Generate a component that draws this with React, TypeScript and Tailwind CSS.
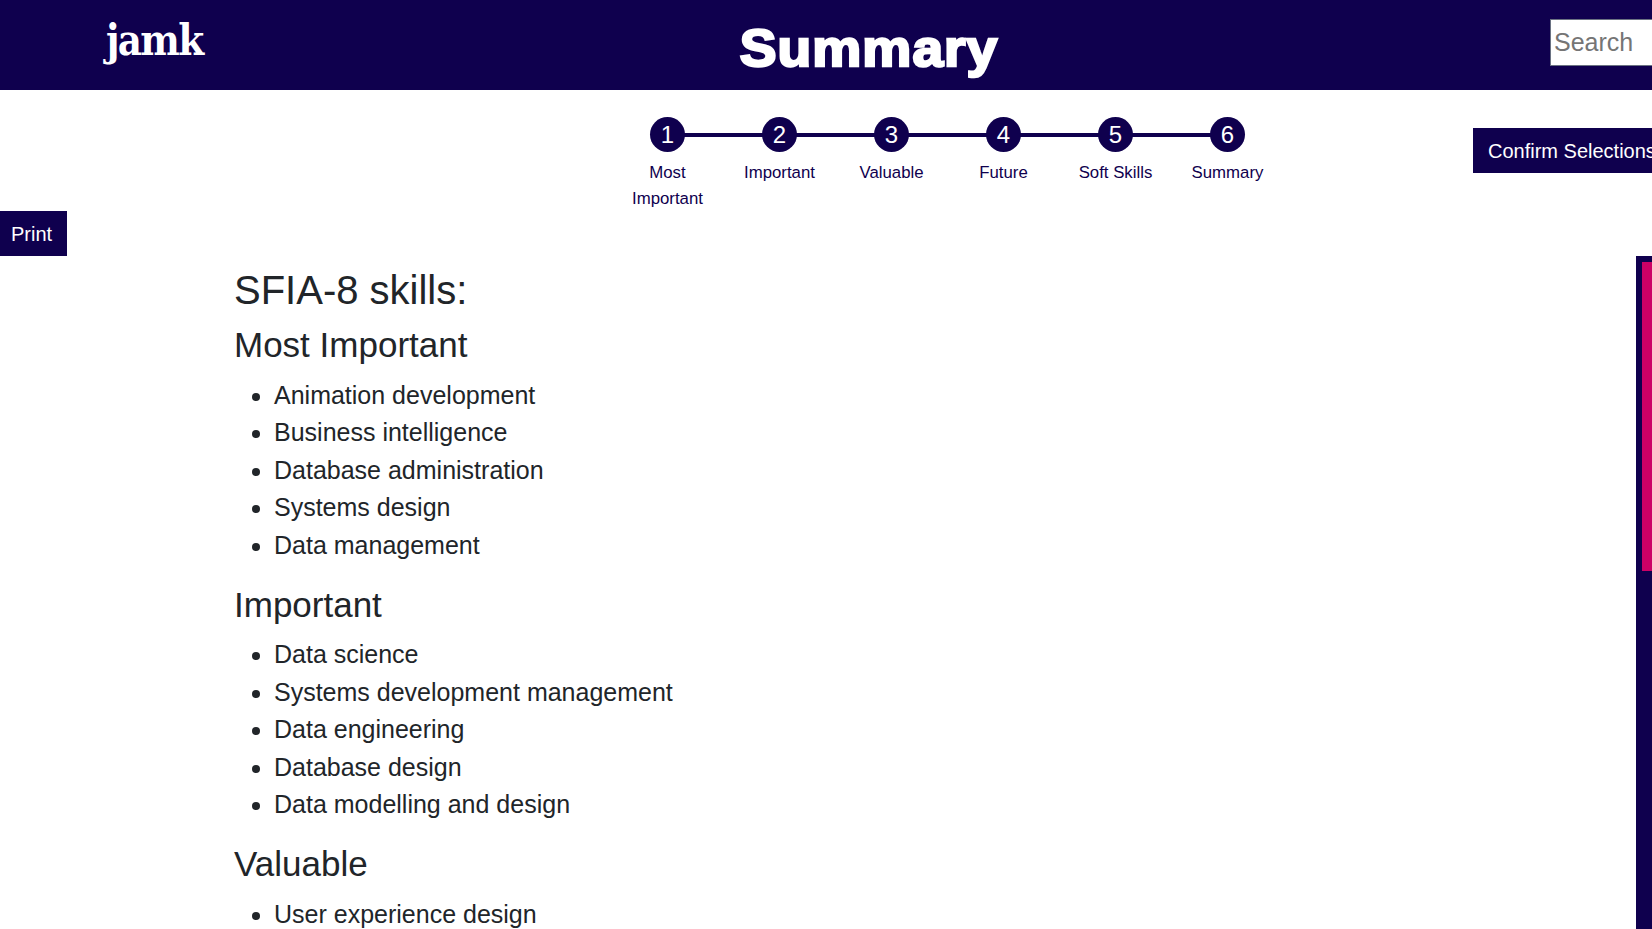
const steps = ["Most Important", "Important", "Valuable", "Future", "Soft Skills", "Summary"];

const sections = [
  {
    title: "Most Important",
    skills: ["Animation development", "Business intelligence", "Database administration", "Systems design", "Data management"],
  },
  {
    title: "Important",
    skills: ["Data science", "Systems development management", "Data engineering", "Database design", "Data modelling and design"],
  },
  {
    title: "Valuable",
    skills: ["User experience design"],
  },
];

function Stepper() {
  return (
    <ol className="flex w-[672px] shrink-0 pt-[27px]">
      {steps.map((step, i) => (
        <li key={step} className="relative w-[112px] flex flex-col items-center text-center">
          {/* connector runs from the previous circle's centre to this one */}
          {i > 0 && <div className="absolute top-[16px] right-[56px] w-[112px] h-[4px] bg-[#0f004e]" />}
          <div className="relative z-10 w-[35px] h-[35px] pl-[1px] rounded-full bg-[#0f004e] text-white text-[24px] leading-[35px]">{i + 1}</div>
          <div className="mt-[8px] pl-[16px] pr-[15px] text-[16.8px] leading-[26px] text-[#0f004e]">{step}</div>
        </li>
      ))}
    </ol>
  );
}

export default function App() {
  return (
    <div className="h-[929px] flex flex-col overflow-hidden bg-white font-['Liberation_Sans',Arial,sans-serif] text-[#212529]">
      <header className="bg-[#0f004e] h-[90px] shrink-0 flex items-start">
        <div className="w-[740px] shrink-0 pl-[106px] pt-[10px]">
          <div className="origin-left scale-x-[0.87] font-['DejaVu_Serif',serif] font-bold text-[43px] leading-[60px] tracking-[-2px] text-white">jamk</div>
        </div>
        <h1 className="w-[258px] shrink-0 text-center scale-x-[1.06] text-white font-bold text-[52px] leading-[97px] tracking-[1px] whitespace-nowrap [-webkit-text-stroke:2.5px_white]">Summary</h1>
        <input
          placeholder="Search"
          className="ml-[552px] mt-[19px] w-[200px] h-[47px] shrink-0 bg-white border border-gray-500 px-[3px] text-[25px] placeholder:text-[#757575]"
        />
      </header>

      <div className="flex items-start h-[121px] shrink-0 pl-[611px]">
        <Stepper />
        <button className="bg-[#0f004e] ml-[190px] mt-[38px] h-[45px] w-[200px] shrink-0 pl-[15px] text-left text-white text-[20px] whitespace-nowrap">
          Confirm Selections
        </button>
      </div>

      <div className="h-[45px] shrink-0">
        <button className="bg-[#0f004e] h-[45px] w-[67px] text-white text-[20px] pr-[4px]">Print</button>
      </div>

      <div className="flex flex-1 min-h-0">
        <main className="flex-1 pl-[234px] pt-[10px]">
          <h2 className="text-[40px] leading-[48px] mb-[10px]">SFIA-8 skills:</h2>
          {sections.map((s) => (
            <section key={s.title} className="mb-[19.5px]">
              <h3 className="text-[35px] leading-[42px] mb-[10.5px]">{s.title}</h3>
              <ul className="list-disc pl-[40px]">
                {s.skills.map((skill) => (
                  <li key={skill} className="text-[25px] leading-[37.5px]">{skill}</li>
                ))}
              </ul>
            </section>
          ))}
        </main>
        <aside className="bg-[#0f004e] w-[16px] shrink-0 pl-[6px] pt-[6px]">
          <div className="h-[309px] bg-[#cc0066]" />
        </aside>
      </div>
    </div>
  );
}
